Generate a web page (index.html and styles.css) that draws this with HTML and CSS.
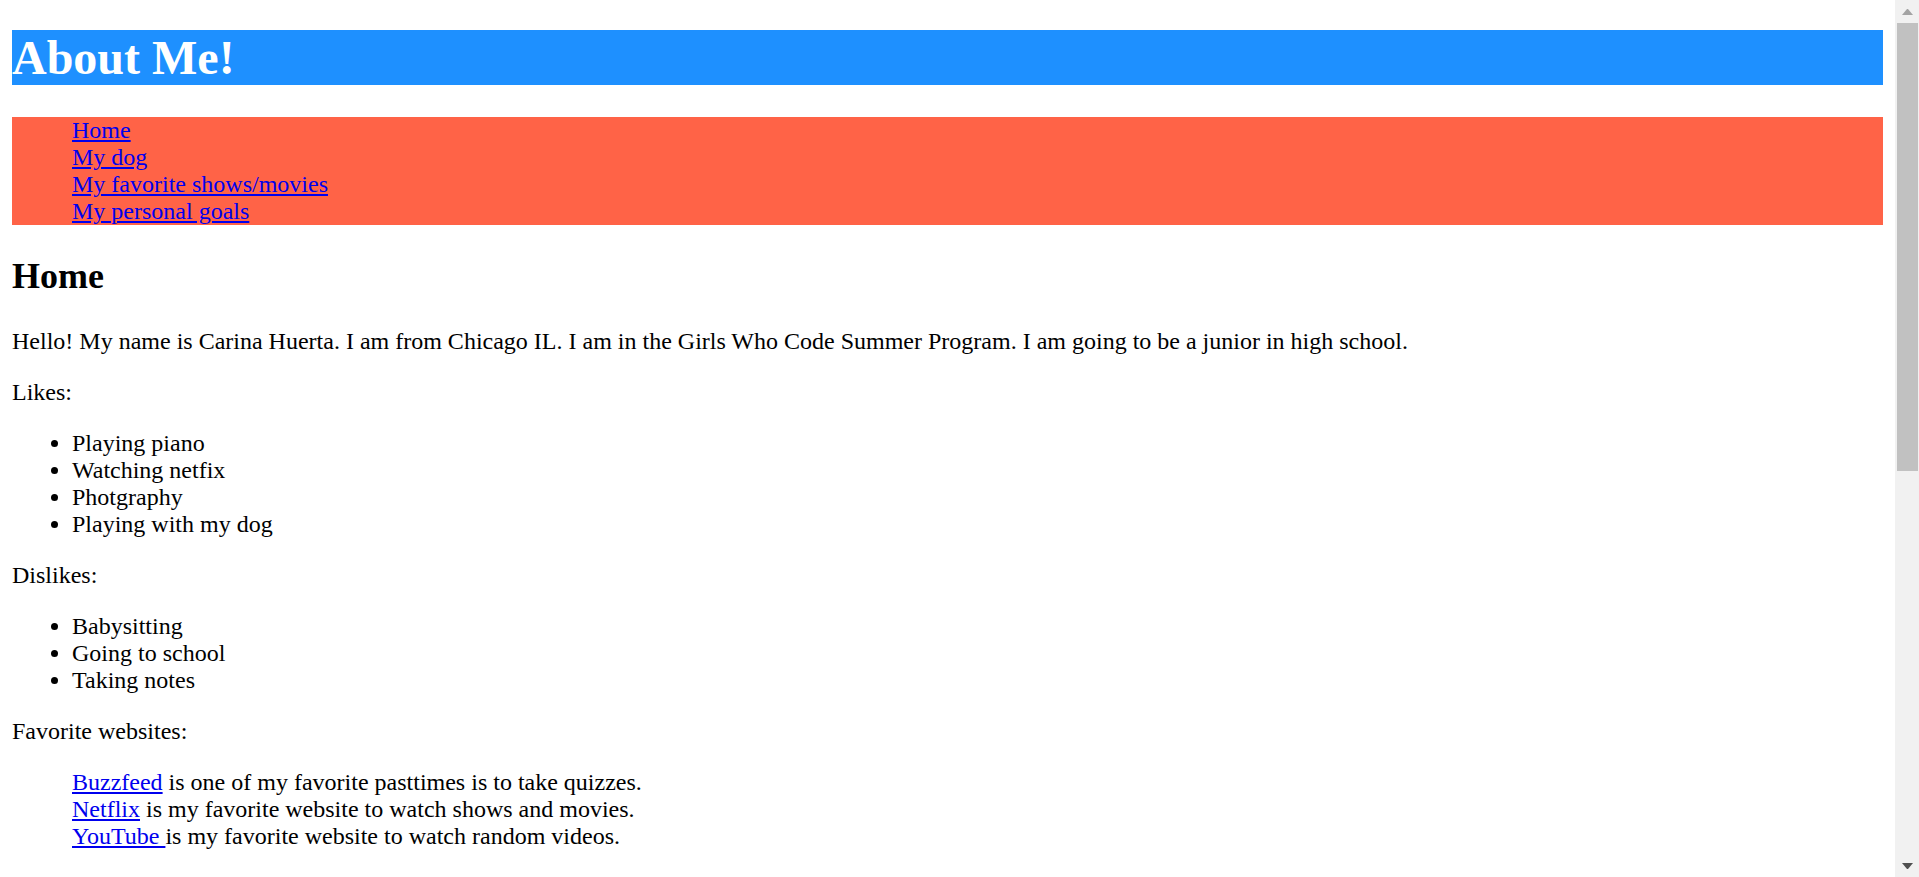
FILE: index.html
```html
<!DOCTYPE html>
<html lang="en">
<head>
<meta charset="utf-8">
<title>About Me!</title>
<link rel="stylesheet" href="styles.css">
</head>
<body>
<h1 class="title">About Me!</h1>
<ul class="nav">
  <li><a href="#home">Home</a></li>
  <li><a href="#dog">My dog</a></li>
  <li><a href="#shows">My favorite shows/movies</a></li>
  <li><a href="#goals">My personal goals</a></li>
</ul>

<section id="home">
  <h2 class="heading">Home</h2>
  <p class="para">Hello! My name is Carina Huerta. I am from Chicago IL. I am in the Girls Who Code Summer Program. I am going to be a junior in high school.</p>
  <p class="para">Likes:</p>
  <ul class="list">
    <li>Playing piano</li>
    <li>Watching netfix</li>
    <li>Photgraphy</li>
    <li>Playing with my dog</li>
  </ul>
  <p class="para">Dislikes:</p>
  <ul class="list">
    <li>Babysitting</li>
    <li>Going to school</li>
    <li>Taking notes</li>
  </ul>
  <p class="para">Favorite websites:</p>
  <blockquote class="sites">
    <a href="#buzzfeed">Buzzfeed</a> is one of my favorite pasttimes is to take quizzes.<br>
    <a href="#netflix">Netflix</a> is my favorite website to watch shows and movies.<br>
    <a href="#youtube">YouTube </a>is my favorite website to watch random videos.
  </blockquote>
</section>

<div class="scrollbar" aria-hidden="true">
  <div class="sb-button"><span class="arrow-up"></span></div>
  <div class="sb-track">
    <div class="sb-thumb"></div>
  </div>
  <div class="sb-button"><span class="arrow-down"></span></div>
</div>
</body>
</html>
```

FILE: styles.css
```css
html {
  background: #ffffff;
  overflow: hidden;
}

body {
  margin: 0 36px 12px 12px;
  font-family: "Liberation Serif", "Times New Roman", serif;
  font-size: 24px;
  line-height: 27px;
  color: #000000;
}

a {
  color: #0000ee;
}

.title {
  margin: 30px 0 32px;
  font-size: 48px;
  line-height: 55px;
  font-weight: bold;
  color: #ffffff;
  background: #1e90ff;
}

.nav {
  margin: 24px 0;
  padding-left: 60px;
  list-style: none;
  background: #ff6347;
}

.heading {
  margin: 31px 0;
  font-size: 36px;
  line-height: 41px;
  font-weight: bold;
}

.para {
  margin: 24px 0;
}

.list {
  margin: 24px 0;
  padding-left: 60px;
}

.sites {
  margin: 24px 60px;
}

/* drawn browser scrollbar */
.scrollbar {
  position: fixed;
  top: 0;
  right: 0;
  width: 24px;
  height: 100vh;
  background: #f1f1f1;
  display: flex;
  flex-direction: column;
}

.sb-button {
  height: 23px;
  flex: 0 0 23px;
  display: flex;
  align-items: center;
  justify-content: center;
  padding-left: 1px;
  box-sizing: border-box;
}

.arrow-up {
  width: 1px;
  height: 0;
  border-left: 5px solid transparent;
  border-right: 5px solid transparent;
  border-bottom: 6px solid #a3a3a3;
}

.arrow-down {
  width: 1px;
  height: 0;
  border-left: 5px solid transparent;
  border-right: 5px solid transparent;
  border-top: 6px solid #505050;
}

.sb-track {
  flex: 1 1 auto;
  padding: 0 1px 0 2px;
}

.sb-thumb {
  height: 448px;
  background: #c1c1c1;
}
```
